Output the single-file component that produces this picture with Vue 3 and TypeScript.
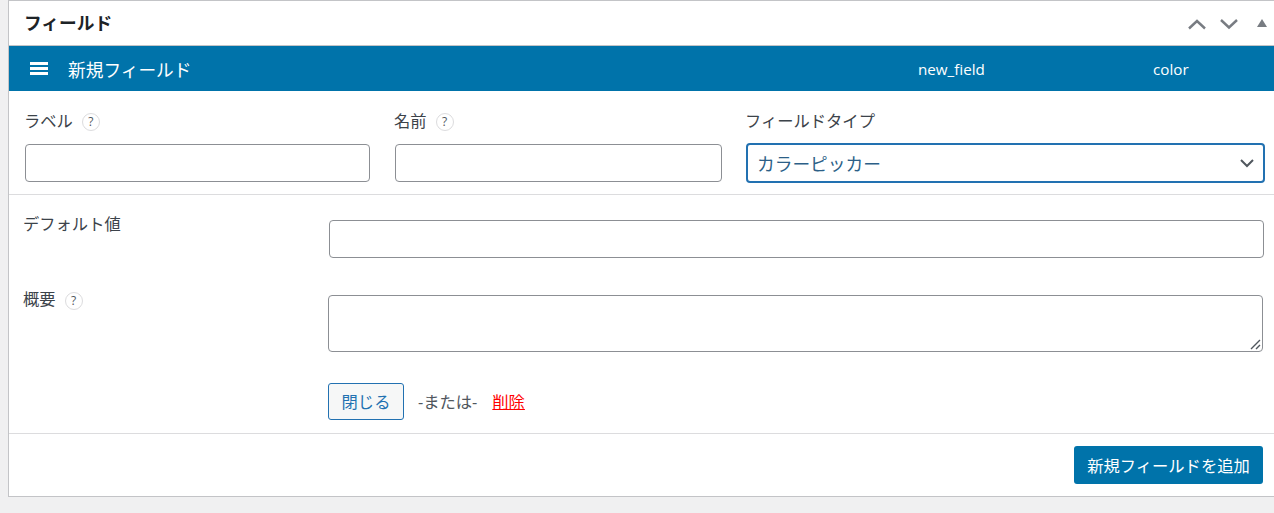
<script setup lang="ts">
interface Col { label: string; help: boolean; cls: string }
const cols: Col[] = [
  { label: 'ラベル', help: true, cls: 'c1' },
  { label: '名前', help: true, cls: 'c2' },
]
</script>

<template>
  <div class="page">
    <section class="card">
      <header class="head">
        <h2 class="title">フィールド</h2>
        <div class="tools">
          <svg width="20" height="12" viewBox="0 0 20 12"><path d="M2 10.5 L10 3 L18 10.5" fill="none" stroke="#787c82" stroke-width="2.4" /></svg>
          <svg width="20" height="12" viewBox="0 0 20 12"><path d="M2 2 L10 9.5 L18 2" fill="none" stroke="#787c82" stroke-width="2.4" /></svg>
          <svg width="10" height="8" viewBox="0 0 10 8"><path d="M5 0 L10 8 L0 8 Z" fill="#787c82" /></svg>
        </div>
      </header>

      <div class="bar">
        <span class="burger"><i></i><i></i><i></i></span>
        <span class="bar-name">新規フィールド</span>
        <span class="bar-key">new_field</span>
        <span class="bar-type">color</span>
      </div>

      <div class="top-row">
        <div v-for="c in cols" :key="c.label" class="col" :class="c.cls">
          <div class="lab">{{ c.label }}<span class="help">?</span></div>
          <div class="input"></div>
        </div>
        <div class="col c3">
          <div class="lab">フィールドタイプ</div>
          <div class="select">
            <span>カラーピッカー</span>
            <svg width="16" height="10" viewBox="0 0 16 10"><path d="M2 2 L8 8 L14 2" fill="none" stroke="#50575e" stroke-width="2" /></svg>
          </div>
        </div>
      </div>

      <div class="rows">
        <div class="row r-default">
          <div class="side">デフォルト値</div>
          <div class="input grow"></div>
        </div>
        <div class="row r-desc">
          <div class="side">概要<span class="help">?</span></div>
          <div class="area">
            <svg class="grip" width="11" height="11" viewBox="0 0 11 11"><path d="M1 10 L10 1 M6 10 L10 6" stroke="#50575e" stroke-width="1.4" fill="none" /></svg>
          </div>
        </div>
        <div class="actions">
          <button class="close" type="button">閉じる</button>
          <span class="or">-または-</span>
          <a class="del" href="#">削除</a>
        </div>
      </div>

      <footer class="foot">
        <button class="add" type="button">新規フィールドを追加</button>
      </footer>
    </section>
  </div>
</template>

<style>
html, body { margin: 0; background: #f0f0f1; overflow: hidden; }
</style>

<style scoped>
.page {
  width: 1274px;
  height: 513px;
  padding-left: 8px;
  box-sizing: border-box;
  overflow: hidden;
  font-family: "Open Sans", "Noto Sans CJK JP", sans-serif;
  color: #3c434a;
  font-size: 16.3px;
}
.card {
  width: 1290px;
  height: 497px;
  box-sizing: border-box;
  background: #fff;
  border: 1px solid #c3c4c7;
  display: flex;
  flex-direction: column;
}
.head {
  height: 44px;
  flex: none;
  display: flex;
  align-items: center;
  justify-content: space-between;
  border-bottom: 1px solid #c3c4c7;
  padding-left: 15px;
}
.title {
  margin: -2px 0 0;
  font-size: 17.7px;
  font-weight: 700;
  color: #1d2327;
}
.tools {
  display: flex;
  align-items: center;
  width: 110px;
  gap: 12px;
  padding-top: 1px;
}
.tools svg:nth-child(3) { margin-left: 6px; margin-top: -2px; }
.bar {
  height: 45px;
  flex: none;
  background: #0073aa;
  color: #fff;
  display: flex;
  align-items: center;
  padding-left: 21px;
}
.burger {
  width: 18px;
  display: flex;
  flex-direction: column;
  gap: 2px;
}
.burger i { display: block; height: 3px; background: #fff; }
.bar-name { margin-left: 20px; width: 850px; font-size: 17.7px; }
.bar-key { width: 235px; font-size: 15.2px; }
.bar-type { font-size: 15.2px; }
.top-row {
  height: 104px;
  flex: none;
  box-sizing: border-box;
  border-bottom: 1px solid #dcdcde;
  position: relative;
  display: flex;
}
.col { display: flex; flex-direction: column; box-sizing: border-box; padding-top: 17px; }
.c1 { width: 369px; padding-left: 15px; }
.c2 { width: 351px; padding-left: 16px; }
.c3 { padding-left: 16px; }
.c1 .input { margin-left: 1px; width: 345px; }
.c2 .input { margin-left: 1px; width: 327px; }
.lab {
  height: 26px;
  line-height: 26px;
  display: flex;
  align-items: center;
}
.help {
  display: inline-flex;
  align-items: center;
  justify-content: center;
  width: 16px;
  height: 16px;
  margin-left: 9px;
  margin-top: 2px;
  border: 1px solid #dcdcde;
  border-radius: 50%;
  font-size: 12px;
  line-height: 1;
  color: #50575e;
}
.input {
  height: 38px;
  box-sizing: border-box;
  border: 1px solid #8c8f94;
  border-radius: 4px;
  margin-top: 10px;
  background: #fff;
}
.select {
  width: 519px;
  height: 40px;
  margin-top: 9px;
  margin-left: 1px;
  box-sizing: border-box;
  border: 2px solid #2271b1;
  border-radius: 4px;
  display: flex;
  align-items: center;
  justify-content: space-between;
  padding: 0 8px 0 9px;
  font-size: 17.7px;
  color: #2c5f87;
}
.rows { flex: 1; display: flex; flex-direction: column; }
.row { display: flex; }
.side { padding-left: 14px; display: flex; align-items: flex-start; line-height: 24px; }
.side .help { margin-top: 5px; }
.r-default { padding-top: 25px; height: 100px; box-sizing: border-box; }
.r-default .side { width: 306px; margin-top: -8px; }
.r-default .grow { margin: 0; width: 935px; }
.r-desc { height: 88px; }
.r-desc .side { width: 305px; margin-top: -8px; }
.area {
  width: 935px;
  height: 57px;
  position: relative;
  box-sizing: border-box;
  border: 1px solid #8c8f94;
  border-radius: 4px;
}
.grip { position: absolute; right: 1px; bottom: 1px; }
.actions {
  display: flex;
  align-items: center;
  padding-left: 319px;
  height: 37px;
}
.close {
  width: 76px;
  height: 37px;
  box-sizing: border-box;
  border: 1px solid #2271b1;
  border-radius: 3px;
  background: #f6f7f7;
  color: #2271b1;
  font: inherit;
  padding: 0 0 2px;
}
.or { margin-left: 14px; margin-top: -2px; color: #50575e; }
.del { margin-left: 15px; margin-top: -2px; color: #f00; text-decoration: underline; }
.foot {
  margin-top: auto;
  height: 63px;
  flex: none;
  box-sizing: border-box;
  border-top: 1px solid #dcdcde;
  padding-top: 12px;
  padding-left: 1065px;
}
.add {
  width: 189px;
  height: 38px;
  border: 0;
  border-radius: 3px;
  background: #0073aa;
  color: #fff;
  font: inherit;
  padding: 0;
}
</style>
